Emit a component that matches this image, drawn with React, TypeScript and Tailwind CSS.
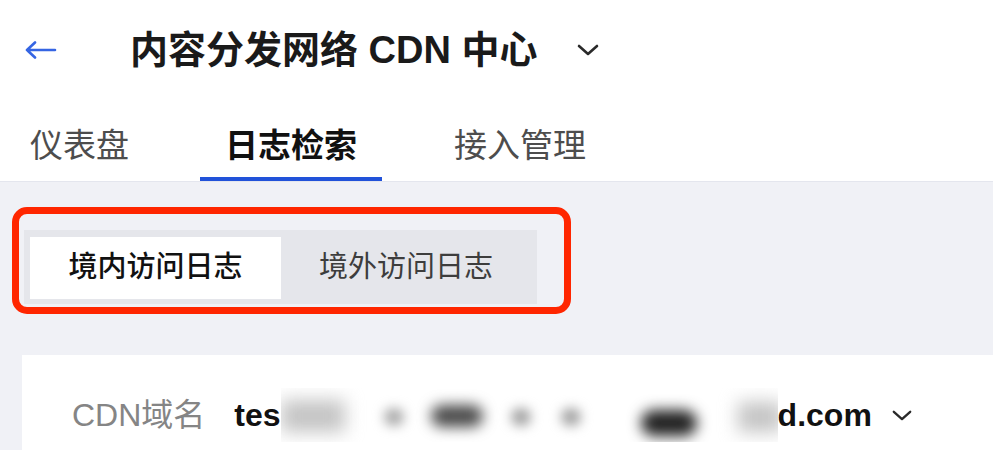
import React from 'react';

const Chevron = ({ className }: { className?: string }) => (
  <svg className={className} viewBox="0 0 22 12" fill="none" stroke="currentColor" strokeWidth="2.6" strokeLinecap="round" strokeLinejoin="round">
    <path d="M2 2l9 8 9-8" />
  </svg>
);

const App = () => {
  return (
    <div className="relative w-[993px] h-[450px] overflow-hidden bg-[#f0f1f6] font-['Liberation_Sans','Noto_Sans_CJK_SC',sans-serif]">
      {/* header */}
      <div className="bg-white border-b border-[#e4e6ee]">
        <div className="h-[100px] flex items-center">
          <svg className="ml-[25px] w-[32px] h-[18px] text-[#3565e3]" viewBox="0 0 32 18" fill="none" stroke="currentColor" strokeWidth="2.6" strokeLinecap="round" strokeLinejoin="round">
            <path d="M2 9h28M10 1.5L2 9l8 7.5" />
          </svg>
          <h1 className="ml-[73px] text-[38px] leading-none font-bold text-[#1a1a1a]">内容分发网络 CDN 中心</h1>
          <Chevron className="ml-[40px] w-[22px] h-[12px] text-[#2a2a2a]" />
        </div>
        <div className="flex h-[81px] items-end text-[33px] leading-[40px]">
          <div className="ml-[30px] pb-[15px] text-[#4d4d4d]">仪表盘</div>
          <div className="ml-[71px] px-[25px] pb-[11px] border-b-4 border-[#2152d9] font-semibold text-[#111]">日志检索</div>
          <div className="ml-[72px] pb-[15px] text-[#4d4d4d]">接入管理</div>
        </div>
      </div>

      {/* segmented control */}
      <div className="mt-[48px] ml-[24px] w-[513px] h-[74px] p-[6px] pt-[7px] bg-[#e5e6eb] flex">
        <div className="w-[251px] h-[62px] bg-white flex items-center justify-center text-[29px] font-medium text-[#111]">境内访问日志</div>
        <div className="w-[250px] h-[62px] flex items-center justify-center text-[29px] text-[#3d3d3d]">境外访问日志</div>
      </div>

      {/* annotation */}
      <div className="absolute left-[12px] top-[207px] w-[559px] h-[107px] border-[7px] border-[#ff2600] rounded-[15px]"></div>

      {/* card */}
      <div className="mt-[51px] ml-[22px] h-[120px] bg-white pl-[50px] pt-[40px]">
        <div className="flex items-center h-[40px] text-[32px] leading-none">
          <span className="text-[#858585]">CDN域名</span>
          <span className="ml-[29px] font-semibold text-[#111]">tes</span>
          <div className="relative w-[497px] h-[54px] bg-white overflow-hidden">
            <span className="absolute left-[0px] top-[12px] w-[64px] h-[32px] bg-[#c4c4c4] blur-[9px]"></span>
            <span className="absolute left-[103px] top-[20px] w-[20px] h-[18px] rounded-full bg-[#a8a8a8] blur-[6px]"></span>
            <span className="absolute left-[150px] top-[17px] w-[52px] h-[22px] rounded-full bg-[#4a4a4a] blur-[7px]"></span>
            <span className="absolute left-[230px] top-[20px] w-[20px] h-[18px] rounded-full bg-[#a0a0a0] blur-[6px]"></span>
            <span className="absolute left-[280px] top-[20px] w-[20px] h-[18px] rounded-full bg-[#a0a0a0] blur-[6px]"></span>
            <span className="absolute left-[360px] top-[22px] w-[56px] h-[26px] rounded-full bg-[#222] blur-[7px]"></span>
            <span className="absolute left-[457px] top-[14px] w-[44px] h-[30px] bg-[#c4c4c4] blur-[9px]"></span>
          </div>
          <span className="font-semibold text-[#111]">d.com</span>
          <Chevron className="ml-[20px] w-[20px] h-[11px] text-[#2a2a2a]" />
        </div>
      </div>
    </div>
  );
};

export default App;
